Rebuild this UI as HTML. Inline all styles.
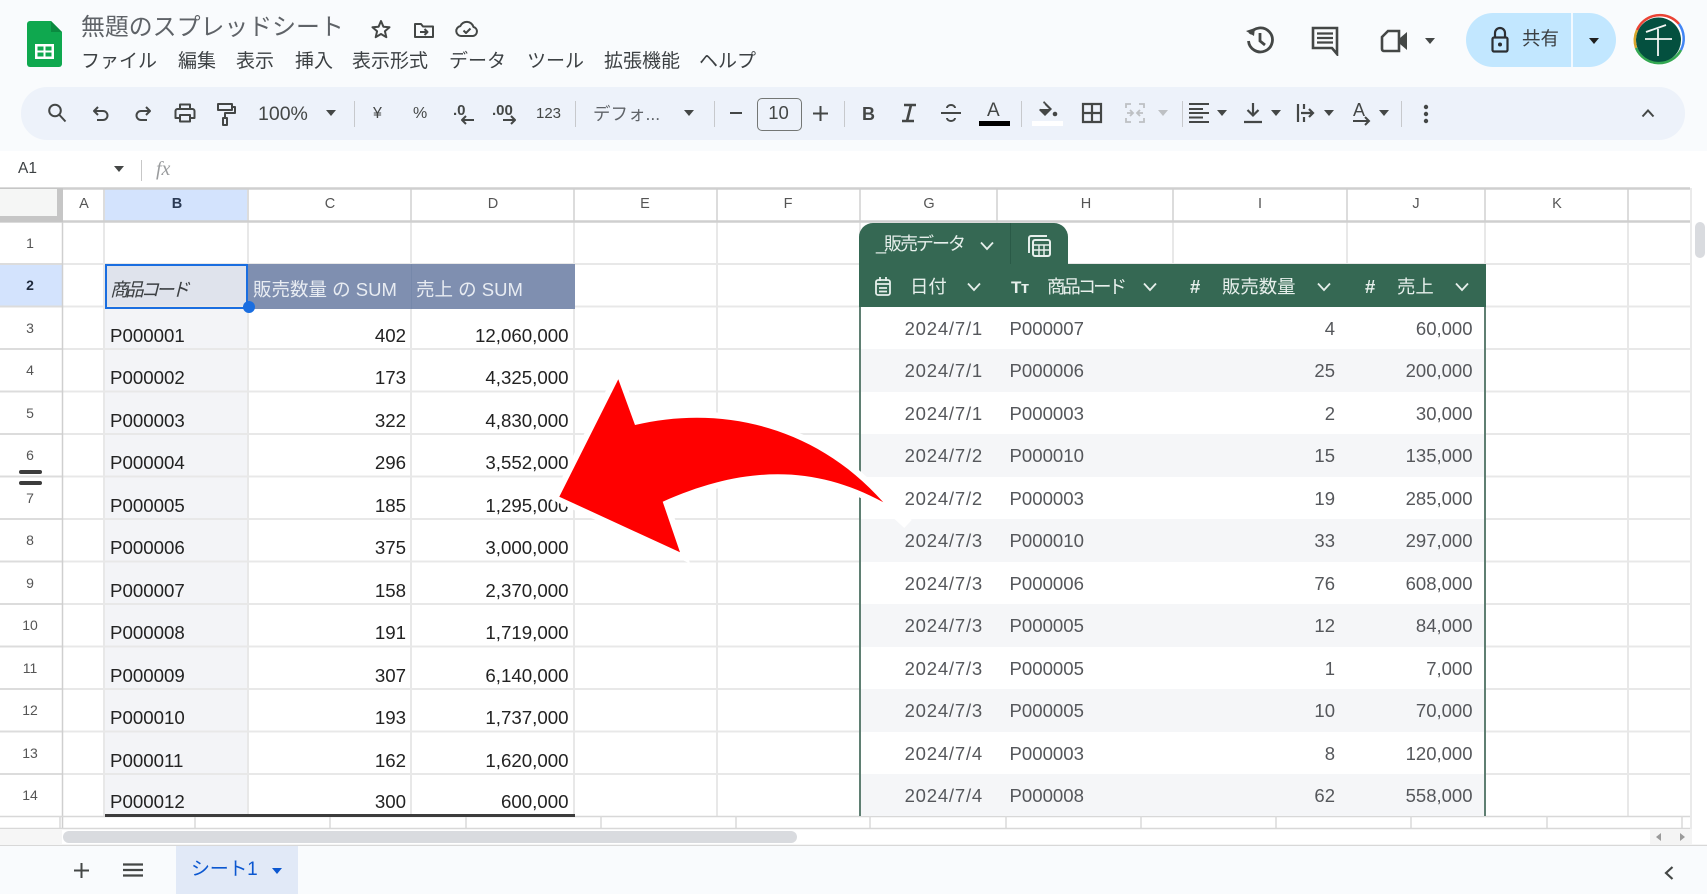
<!DOCTYPE html>
<html lang="ja"><head><meta charset="utf-8"><title>無題のスプレッドシート</title>
<style>
html,body{margin:0;padding:0;background:#fff}
#p{position:relative;width:1707px;height:894px;overflow:hidden;background:#fff;font-family:"Liberation Sans","Noto Sans CJK JP",sans-serif;color:#444746;filter:blur(.35px)}
#p div,#p span.t,#p svg{position:absolute}
.t{white-space:nowrap;line-height:24px;position:absolute}
.m{top:50px;font-size:19px;color:#3c4043}
.tb{top:102px;font-size:17px;color:#444746}
.d{width:1px;background:#c7c9cc;top:101px;height:26px}
.ic{fill:none;stroke:#444746;stroke-width:2;stroke-linecap:butt;stroke-linejoin:round}
.ar{width:0;height:0;border-left:5.5px solid transparent;border-right:5.5px solid transparent;border-top:6px solid #444746;top:110px}
.ch{font-size:14.5px;color:#555;top:192px;width:40px;text-align:center}
.rh{font-size:14px;color:#555;left:10px;width:40px;text-align:center}
.r{left:0;width:1707px;height:24px}
.a{left:110px;font-size:18.7px;color:#222}
.b{right:1301px;font-size:18.7px;color:#222}
.c{right:1138.5px;font-size:18.7px;color:#222}
.e{right:724px;font-size:18.5px;color:#55575b;letter-spacing:.8px}
.f{left:1009.5px;font-size:18.6px;color:#55575b}
.g{right:372px;font-size:18.5px;color:#55575b}
.h{right:234.5px;font-size:18.5px;color:#55575b}
.w{color:#e8ecf2;font-size:18.5px;top:278px}
.th{color:#e6efeb;font-size:18.4px;top:275px}
</style></head><body><div id="p">

<!-- top -->
<div style="left:0;top:0;width:1707px;height:151px;background:#f9fbfd"></div>
<svg style="left:27px;top:20px" width="36" height="48" viewBox="0 0 36 48"><path d="M3 1H24L35 12V44a3 3 0 0 1-3 3H3a3 3 0 0 1-3-3V4a3 3 0 0 1 3-3z" fill="#0fa84f"/><path d="M24 1L35 12H24z" fill="#0b8a40"/><path d="M8 24H27V39H8z M10.500 26.500V30.500H16.500V26.500z M18.500 26.500V30.500H24.500V26.500z M10.500 32.500V36.500H16.500V32.500z M18.500 32.500V36.500H24.500V32.500z" fill="#fff" fill-rule="evenodd"/></svg>
<span class="t" style="left:81px;top:16px;font-size:23.9px;color:#5f6368">無題のスプレッドシート</span>
<svg style="left:369px;top:17px" width="24" height="24" viewBox="0 0 24 24"><path class="ic" d="M12 4l2.400 5.700 6.100.5-4.600 4 1.400 6L12 17l-5.300 3.200 1.400-6-4.600-4 6.100-.5z"/></svg>
<svg style="left:412px;top:18px" width="24" height="24" viewBox="0 0 24 24"><path class="ic" d="M3 6h6l2 2.500h10V19H3z"/><path class="ic" d="M8 14h7M12.500 11l3 3-3 3"/></svg>
<svg style="left:454px;top:17px" width="26" height="24" viewBox="0 0 26 24"><path class="ic" d="M7 19a5 5 0 0 1-.7-9.900A7 7 0 0 1 19.500 10 4.600 4.600 0 0 1 19 19z"/><path class="ic" d="M9.500 13.500l2.500 2.500 4.500-4.500"/></svg>
<span class="t m" style="left:81px">ファイル</span>
<span class="t m" style="left:178px">編集</span>
<span class="t m" style="left:236px">表示</span>
<span class="t m" style="left:295px">挿入</span>
<span class="t m" style="left:352px">表示形式</span>
<span class="t m" style="left:449px">データ</span>
<span class="t m" style="left:527px">ツール</span>
<span class="t m" style="left:604px">拡張機能</span>
<span class="t m" style="left:699px">ヘルプ</span>

<!-- right top -->
<svg style="left:1244px;top:24px" width="32" height="32" viewBox="0 0 32 32"><path d="M6 10A12 12 0 1 1 4.500 17" fill="none" stroke="#444746" stroke-width="2.800"/><path d="M2 7l8 5 1-8z" fill="#444746"/><path d="M16 9v8l5 4" fill="none" stroke="#444746" stroke-width="2.800"/></svg>
<svg style="left:1309px;top:24px" width="32" height="32" viewBox="0 0 32 32"><path d="M4 4H28V30L23 24H4z" fill="none" stroke="#444746" stroke-width="2.600"/><path d="M8 9.500H24M8 14H24M8 18.500H24" stroke="#444746" stroke-width="2.200"/></svg>
<svg style="left:1380px;top:28px" width="30" height="26" viewBox="0 0 30 26"><path d="M8 3H19V23H4a2 2 0 0 1-2-2V9z" fill="none" stroke="#444746" stroke-width="2.600"/><path d="M20 10l7-6V22l-7-6z" fill="#444746"/></svg>
<div style="left:1425px;top:38px;width:0;height:0;border-left:5px solid transparent;border-right:5px solid transparent;border-top:6px solid #444746"></div>
<div style="left:1466px;top:13px;width:150px;height:54px;border-radius:27px;background:#c2e7ff"></div>
<div style="left:1571px;top:13px;width:1.500px;height:54px;background:#f2f9ff"></div>
<svg style="left:1487px;top:26px" width="26" height="28" viewBox="0 0 26 28"><path d="M8 12V7a5 5 0 0 1 10 0v5" fill="none" stroke="#2b2f33" stroke-width="2.200"/><rect x="5.500" y="11.500" width="15" height="14" rx="1.500" fill="none" stroke="#2b2f33" stroke-width="2.200"/><circle cx="13" cy="18.500" r="2" fill="#2b2f33"/></svg>
<span class="t" style="left:1522px;top:27px;font-size:18.500px;color:#3c4043">共有</span>
<div style="left:1589px;top:38px;width:0;height:0;border-left:5.500px solid transparent;border-right:5.500px solid transparent;border-top:6px solid #1f1f1f"></div>
<svg style="left:1631px;top:12px" width="55" height="56" viewBox="0 0 55 56"><circle cx="27.500" cy="28" r="25.500" fill="#fff"/><circle cx="27.500" cy="28" r="22.500" fill="#04503f"/><path d="M5 36A25 25 0 0 1 6 18" fill="none" stroke="#d7a52b" stroke-width="2.500"/><path d="M6 18A25 25 0 0 1 48 12" fill="none" stroke="#ea4335" stroke-width="2.500"/><path d="M48 12A25 25 0 0 1 50 38" fill="none" stroke="#4285f4" stroke-width="2.500"/><path d="M50 38A25 25 0 0 1 5 36" fill="none" stroke="#34a853" stroke-width="2.500"/><path d="M15 20l20-7M14 27H41M27 17V44" fill="none" stroke="#f4f7f5" stroke-width="1.800"/></svg>

<!-- toolbar -->
<div style="left:21px;top:87px;width:1664px;height:53px;border-radius:26px;background:#edf2fa"></div>
<svg style="left:45px;top:101px" width="24" height="24" viewBox="0 0 24 24"><circle cx="10" cy="9.500" r="5.800" class="ic" fill="none"/><path class="ic" d="M14.500 14l6 6.500"/></svg>
<svg style="left:89px;top:102px" width="24" height="24" viewBox="0 0 24 24"><path class="ic" d="M9 5L5 9l4 4M5 9h9a4.500 4.500 0 0 1 0 9H8"/></svg>
<svg style="left:131px;top:102px" width="24" height="24" viewBox="0 0 24 24"><path class="ic" d="M15 5l4 4-4 4M19 9h-9a4.500 4.500 0 0 0 0 9h6"/></svg>
<svg style="left:173px;top:101px" width="24" height="24" viewBox="0 0 24 24"><path class="ic" d="M7 8V3.500h10V8M7 17H2.500V10a2 2 0 0 1 2-2h15a2 2 0 0 1 2 2v7H17M7 14h10v6.500H7z"/></svg>
<svg style="left:214px;top:101px" width="24" height="26" viewBox="0 0 24 26"><path class="ic" d="M4 3h14v6H4zM18 6h3v6H11v5M9 17h4v7H9z"/></svg>
<span class="t tb" style="left:258px;top:102px;font-size:19.500px">100%</span>
<div class="ar" style="left:326px"></div>
<div class="d" style="left:354px"></div>
<span class="t tb" style="left:373px;font-size:16px">¥</span>
<span class="t tb" style="left:413px;font-size:16px">%</span>
<span class="t tb" style="left:453px;top:99px;font-size:15px;font-weight:700">.0</span>
<svg style="left:458px;top:113px" width="18" height="14" viewBox="0 0 18 14"><path class="ic" d="M16 7H4M8 3L4 7l4 4"/></svg>
<span class="t tb" style="left:492px;top:99px;font-size:15px;font-weight:700">.00</span>
<svg style="left:501px;top:113px" width="18" height="14" viewBox="0 0 18 14"><path class="ic" d="M2 7h12M10 3l4 4-4 4"/></svg>
<span class="t tb" style="left:536px;top:102px;font-size:15px">123</span>
<div class="d" style="left:575px"></div>
<span class="t tb" style="left:593px;font-size:17.500px;color:#5f6368">デフォ...</span>
<div class="ar" style="left:684px"></div>
<div class="d" style="left:714px"></div>
<svg style="left:729px;top:107px" width="14" height="12" viewBox="0 0 14 12"><path d="M1 6H13" stroke="#444746" stroke-width="2"/></svg>
<div style="left:757px;top:98px;width:43px;height:31px;border:1px solid #747775;border-radius:5px;box-sizing:content-box"></div>
<span class="t tb" style="left:756px;top:101px;width:45px;text-align:center;font-size:18.500px">10</span>
<svg style="left:813px;top:106px" width="15" height="15" viewBox="0 0 15 15"><path d="M0 7.500H15M7.500 0V15" stroke="#444746" stroke-width="2"/></svg>
<div class="d" style="left:844px"></div>
<span class="t tb" style="left:862px;font-size:18px;font-weight:700">B</span>
<svg style="left:898px;top:102px" width="22" height="22" viewBox="0 0 22 22"><path d="M6 3H18M4 19H16M13 3L9 19" fill="none" stroke="#444746" stroke-width="2.600"/></svg>
<svg style="left:940px;top:102px" width="22" height="22" viewBox="0 0 22 22"><path class="ic" d="M1 11H21M15 6a4 3 0 0 0-8 0M7 16a4 3 0 0 0 8 0"/></svg>
<span class="t tb" style="left:987px;top:99px;font-size:19px">A</span>
<div style="left:979px;top:121px;width:31px;height:5px;background:#000"></div>
<div class="d" style="left:1021px"></div>
<svg style="left:1036px;top:99px" width="24" height="22" viewBox="0 0 24 22"><path d="M8 2l-1 2 2 1-6 6 6 6 7-7z" fill="#444746"/><path d="M8 5l5 5H4z" fill="#edf2fa"/><circle cx="19" cy="15" r="2.300" fill="#444746"/></svg>
<div style="left:1032px;top:121px;width:31px;height:5px;background:#fff"></div>
<svg style="left:1081px;top:102px" width="22" height="22" viewBox="0 0 22 22"><path d="M2 2H20V20H2zM11 2V20M2 11H20" fill="none" stroke="#444746" stroke-width="2.200"/></svg>
<svg style="left:1124px;top:102px" width="22" height="22" viewBox="0 0 22 22"><path d="M2 6V2H7M15 2H20V6M2 16V20H7M15 20H20V16M3 11H9M6 8l3 3-3 3M19 11H13M16 8l-3 3 3 3" fill="none" stroke="#bdc0c3" stroke-width="1.800"/></svg>
<div class="ar" style="left:1158px;border-top-color:#bdc0c3"></div>
<div class="d" style="left:1182px"></div>
<svg style="left:1188px;top:102px" width="22" height="22" viewBox="0 0 22 22"><path d="M1 2H21M1 7H15M1 11H21M1 15.500H15M1 20H21" stroke="#444746" stroke-width="2"/></svg>
<div class="ar" style="left:1217px"></div>
<svg style="left:1243px;top:102px" width="20" height="22" viewBox="0 0 20 22"><path d="M10 1V13M4.500 8L10 13.500 15.500 8M1 20H19" fill="none" stroke="#444746" stroke-width="2.200"/></svg>
<div class="ar" style="left:1271px"></div>
<svg style="left:1296px;top:102px" width="20" height="22" viewBox="0 0 20 22"><path d="M2 2V20M8 2V7M8 15V20M5 11H17M13 7l4 4-4 4" fill="none" stroke="#444746" stroke-width="2.200"/></svg>
<div class="ar" style="left:1324px"></div>
<span class="t tb" style="left:1353px;top:98px;font-size:18px">A</span>
<svg style="left:1352px;top:116px" width="20" height="12" viewBox="0 0 20 12"><path d="M1 5H17M13 1l4 4-4 4" fill="none" stroke="#444746" stroke-width="2"/></svg>
<div class="ar" style="left:1379px"></div>
<div class="d" style="left:1401px"></div>
<svg style="left:1422px;top:104px" width="8" height="20" viewBox="0 0 8 20"><circle cx="4" cy="3" r="2.200" fill="#444746"/><circle cx="4" cy="10" r="2.200" fill="#444746"/><circle cx="4" cy="17" r="2.200" fill="#444746"/></svg>
<svg style="left:1641px;top:108px" width="14" height="10" viewBox="0 0 14 10"><path d="M1.500 8.500L7 2.500l5.500 6" fill="none" stroke="#444746" stroke-width="2"/></svg>

<!-- formula bar -->
<span class="t" style="left:18px;top:157px;font-size:15.500px;color:#3c4043">A1</span>
<div style="left:114px;top:166px;width:0;height:0;border-left:5.500px solid transparent;border-right:5.500px solid transparent;border-top:6px solid #444746"></div>
<div style="left:141px;top:160px;width:1px;height:21px;background:#c7c7c7"></div>
<span class="t" style="left:156px;top:157px;font-family:'Liberation Serif',serif;font-style:italic;font-size:20px;color:#9a9c9e">fx</span>

<!-- cell fills -->
<div style="left:105px;top:307px;width:142px;height:508px;background:#f3f4f7"></div>
<div style="left:105px;top:264px;width:143px;height:45px;background:#dfe3ec"></div>
<div style="left:105px;top:188px;width:143px;height:34px;background:#d3e3fd"></div>
<div style="left:0;top:264px;width:62px;height:43px;background:#d3e3fd"></div>

<!-- grid -->
<svg style="left:0;top:0" width="1707" height="894" viewBox="0 0 1707 894">
<g stroke="#e8e8e8" stroke-width="2">
<path d="M104 222V816M248 222V816M411 222V816M574 222V816M717 222V816M860 222V816M997 222V816M1173 222V816M1347 222V816M1485 222V816M1628 222V816"/>
<path d="M62 264H1690M62 306.500H1690M62 349H1690M62 391.500H1690M62 434H1690M62 476.500H1690M62 519H1690M62 561.500H1690M62 604H1690M62 646.500H1690M62 689H1690M62 731.500H1690M62 774H1690"/>
</g>
<g stroke="#dcdcdc" stroke-width="2">
<path d="M0 264H62M0 306.500H62M0 349H62M0 391.500H62M0 434H62M0 476.500H62M0 519H62M0 561.500H62M0 604H62M0 646.500H62M0 689H62M0 731.500H62M0 774H62"/>
<path d="M104 189V221M248 189V221M411 189V221M574 189V221M717 189V221M860 189V221M997 189V221M1173 189V221M1347 189V221M1485 189V221M1628 189V221"/>
</g>
<path d="M0 188.500H1690M0 221.500H1690" stroke="#cfcfcf" stroke-width="2.500"/>
<path d="M62.500 222V828" stroke="#cfcfcf" stroke-width="1.500"/>
<rect x="0" y="188" width="63" height="34" fill="#c6c6c6"/>
<rect x="0" y="189" width="57" height="27" fill="#f5f6f5"/>
<path d="M0 816.500H1690M0 828.500H1690M0 845.500H1707" stroke="#d8d8d8" stroke-width="1.500"/>
<path d="M60 816V828M195 816V828M330 816V828M466 816V828M601 816V828M736 816V828M870 816V828M1006 816V828M1141 816V828M1276 816V828M1411 816V828M1547 816V828M1682 816V828" stroke="#dadada" stroke-width="1.500"/>
<path d="M1691 188V845" stroke="#e4e4e4" stroke-width="1.500"/>
</svg>
<div style="left:248px;top:264px;width:327px;height:45px;background:#7f8fb0"></div>
<div style="left:411px;top:264px;width:1px;height:45px;background:#7688aa"></div>
<div style="left:105px;top:814px;width:470px;height:3px;background:#3c3c3c"></div>

<!-- column letters -->
<span class="t ch" style="left:64px">A</span>
<span class="t ch" style="left:157px;font-weight:700;color:#2a3a55">B</span>
<span class="t ch" style="left:310px">C</span>
<span class="t ch" style="left:473px">D</span>
<span class="t ch" style="left:625px">E</span>
<span class="t ch" style="left:768px">F</span>
<span class="t ch" style="left:909px">G</span>
<span class="t ch" style="left:1066px">H</span>
<span class="t ch" style="left:1240px">I</span>
<span class="t ch" style="left:1396px">J</span>
<span class="t ch" style="left:1537px">K</span>

<!-- row labels -->
<span class="t rh" style="top:231px">1</span>
<span class="t rh" style="top:273px;font-weight:700;color:#1f2a3c">2</span>
<span class="t rh" style="top:316px">3</span>
<span class="t rh" style="top:358px">4</span>
<span class="t rh" style="top:401px">5</span>
<span class="t rh" style="top:443px">6</span>
<span class="t rh" style="top:486px">7</span>
<span class="t rh" style="top:528px">8</span>
<span class="t rh" style="top:571px">9</span>
<span class="t rh" style="top:613px">10</span>
<span class="t rh" style="top:656px">11</span>
<span class="t rh" style="top:698px">12</span>
<span class="t rh" style="top:741px">13</span>
<span class="t rh" style="top:783px">14</span>
<div style="left:19px;top:470px;width:23px;height:4px;background:#3c3c3c;border-radius:2px"></div>
<div style="left:19px;top:481px;width:23px;height:4px;background:#3c3c3c;border-radius:2px"></div>

<!-- pivot -->
<span class="t" style="left:110px;top:278px;font-size:18.500px;font-style:italic;color:#3c4043;letter-spacing:-3.200px">商品コード</span>
<span class="t w" style="left:253px">販売数量 の SUM</span>
<span class="t w" style="left:416px">売上 の SUM</span>
<div style="left:105px;top:264px;width:139px;height:41px;border:2px solid #1a6ee0"></div>
<div style="left:243px;top:301px;width:12px;height:12px;border-radius:50%;background:#1a6ee0"></div>

<div class="r" style="top:323.500px"><span class="t a">P000001</span><span class="t b">402</span><span class="t c">12,060,000</span></div>
<div class="r" style="top:366px"><span class="t a">P000002</span><span class="t b">173</span><span class="t c">4,325,000</span></div>
<div class="r" style="top:408.500px"><span class="t a">P000003</span><span class="t b">322</span><span class="t c">4,830,000</span></div>
<div class="r" style="top:451px"><span class="t a">P000004</span><span class="t b">296</span><span class="t c">3,552,000</span></div>
<div class="r" style="top:493.500px"><span class="t a">P000005</span><span class="t b">185</span><span class="t c">1,295,000</span></div>
<div class="r" style="top:536px"><span class="t a">P000006</span><span class="t b">375</span><span class="t c">3,000,000</span></div>
<div class="r" style="top:578.500px"><span class="t a">P000007</span><span class="t b">158</span><span class="t c">2,370,000</span></div>
<div class="r" style="top:621px"><span class="t a">P000008</span><span class="t b">191</span><span class="t c">1,719,000</span></div>
<div class="r" style="top:663.500px"><span class="t a">P000009</span><span class="t b">307</span><span class="t c">6,140,000</span></div>
<div class="r" style="top:706px"><span class="t a">P000010</span><span class="t b">193</span><span class="t c">1,737,000</span></div>
<div class="r" style="top:748.500px"><span class="t a">P000011</span><span class="t b">162</span><span class="t c">1,620,000</span></div>
<div class="r" style="top:789.500px"><span class="t a">P000012</span><span class="t b">300</span><span class="t c">600,000</span></div>

<!-- table -->
<div style="left:860px;top:307px;width:625px;height:509px;background:#fff"></div>
<div style="left:860px;top:349px;width:625px;height:42.500px;background:#f5f6f8"></div>
<div style="left:860px;top:434px;width:625px;height:42.500px;background:#f5f6f8"></div>
<div style="left:860px;top:519px;width:625px;height:42.500px;background:#f5f6f8"></div>
<div style="left:860px;top:604px;width:625px;height:42.500px;background:#f5f6f8"></div>
<div style="left:860px;top:689px;width:625px;height:42.500px;background:#f5f6f8"></div>
<div style="left:860px;top:774px;width:625px;height:42px;background:#f5f6f8"></div>
<div style="left:859px;top:264px;width:2px;height:552px;background:#5f7f72"></div>
<div style="left:1484px;top:264px;width:2px;height:552px;background:#5f7f72"></div>
<div style="left:859px;top:223px;width:209px;height:42px;background:#356853;border-radius:14px 14px 0 0"></div>
<div style="left:859px;top:264px;width:627px;height:43px;background:#356853"></div>
<div style="left:1010px;top:223px;width:1px;height:41px;background:#2a5a47"></div>
<span class="t" style="left:876px;top:232px;font-size:18px;color:#e6efeb;letter-spacing:-2px">_販売データ</span>
<svg style="left:980px;top:241px" width="14" height="10" viewBox="0 0 14 10"><path d="M1 1.500L7 8l6-6.500" fill="none" stroke="#e6efeb" stroke-width="1.800"/></svg>
<svg style="left:1027px;top:232px" width="25" height="26" viewBox="0 0 25 26"><path d="M2 21V6a2 2 0 0 1 2-2H20" fill="none" stroke="#e6efeb" stroke-width="2"/><rect x="6" y="8" width="17" height="16" rx="2" fill="none" stroke="#e6efeb" stroke-width="2"/><path d="M6 13H23M6 18H23M12 13V24M17 13V24" stroke="#e6efeb" stroke-width="1.500"/></svg>
<svg style="left:874px;top:276px" width="18" height="22" viewBox="0 0 18 22"><rect x="2" y="4" width="14" height="15" rx="2" fill="none" stroke="#e6efeb" stroke-width="1.800"/><path d="M2 8H16M6 1V5M12 1V5M5 12H13M5 15.500H13" stroke="#e6efeb" stroke-width="1.800"/></svg>
<span class="t th" style="left:910px">日付</span>
<svg style="left:967px;top:282px" width="14" height="10" viewBox="0 0 14 10"><path d="M1 1.500L7 8l6-6.500" fill="none" stroke="#e6efeb" stroke-width="1.800"/></svg>
<span class="t" style="left:1011px;top:276px;font-size:17px;font-weight:700;color:#e6efeb;letter-spacing:-.5px">Tт</span>
<span class="t th" style="left:1047px;letter-spacing:-3px">商品コード</span>
<svg style="left:1143px;top:282px" width="14" height="10" viewBox="0 0 14 10"><path d="M1 1.500L7 8l6-6.500" fill="none" stroke="#e6efeb" stroke-width="1.800"/></svg>
<span class="t" style="left:1190px;top:275px;font-size:18.500px;font-weight:700;color:#e6efeb">#</span>
<span class="t th" style="left:1222px">販売数量</span>
<svg style="left:1317px;top:282px" width="14" height="10" viewBox="0 0 14 10"><path d="M1 1.500L7 8l6-6.500" fill="none" stroke="#e6efeb" stroke-width="1.800"/></svg>
<span class="t" style="left:1365px;top:275px;font-size:18.500px;font-weight:700;color:#e6efeb">#</span>
<span class="t th" style="left:1397px">売上</span>
<svg style="left:1455px;top:282px" width="14" height="10" viewBox="0 0 14 10"><path d="M1 1.500L7 8l6-6.500" fill="none" stroke="#e6efeb" stroke-width="1.800"/></svg>

<div class="r" style="top:316.500px"><span class="t e">2024/7/1</span><span class="t f">P000007</span><span class="t g">4</span><span class="t h">60,000</span></div>
<div class="r" style="top:359px"><span class="t e">2024/7/1</span><span class="t f">P000006</span><span class="t g">25</span><span class="t h">200,000</span></div>
<div class="r" style="top:401.500px"><span class="t e">2024/7/1</span><span class="t f">P000003</span><span class="t g">2</span><span class="t h">30,000</span></div>
<div class="r" style="top:444px"><span class="t e">2024/7/2</span><span class="t f">P000010</span><span class="t g">15</span><span class="t h">135,000</span></div>
<div class="r" style="top:486.500px"><span class="t e">2024/7/2</span><span class="t f">P000003</span><span class="t g">19</span><span class="t h">285,000</span></div>
<div class="r" style="top:529px"><span class="t e">2024/7/3</span><span class="t f">P000010</span><span class="t g">33</span><span class="t h">297,000</span></div>
<div class="r" style="top:571.500px"><span class="t e">2024/7/3</span><span class="t f">P000006</span><span class="t g">76</span><span class="t h">608,000</span></div>
<div class="r" style="top:614px"><span class="t e">2024/7/3</span><span class="t f">P000005</span><span class="t g">12</span><span class="t h">84,000</span></div>
<div class="r" style="top:656.500px"><span class="t e">2024/7/3</span><span class="t f">P000005</span><span class="t g">1</span><span class="t h">7,000</span></div>
<div class="r" style="top:699px"><span class="t e">2024/7/3</span><span class="t f">P000005</span><span class="t g">10</span><span class="t h">70,000</span></div>
<div class="r" style="top:741.500px"><span class="t e">2024/7/4</span><span class="t f">P000003</span><span class="t g">8</span><span class="t h">120,000</span></div>
<div class="r" style="top:784px"><span class="t e">2024/7/4</span><span class="t f">P000008</span><span class="t g">62</span><span class="t h">558,000</span></div>

<!-- arrow -->
<svg style="left:0;top:0" width="1707" height="894" viewBox="0 0 1707 894">
<path d="M880 498L908 524" stroke="#fff" stroke-width="11" fill="none"/>
<path d="M618.300 379.300L635 425C720 405 815 425 883.300 502.300C815 465 745 465 662.700 501.700L680 552.300L559.300 496.700Z" fill="#fff" stroke="#fff" stroke-width="12" stroke-linejoin="miter"/>
<path d="M618.300 379.300L635 425C720 405 815 425 883.300 502.300C815 465 745 465 662.700 501.700L680 552.300L559.300 496.700Z" fill="#ff0000"/>
</svg>

<!-- scrollbars -->
<div style="left:0;top:829px;width:62px;height:16px;background:#f6f6f6"></div>
<div style="left:63px;top:831px;width:734px;height:12px;border-radius:6px;background:#d9dbdf"></div>
<div style="left:1650px;top:829px;width:42px;height:16px;background:#f4f4f4"></div>
<div style="left:1656px;top:833px;width:0;height:0;border-top:4px solid transparent;border-bottom:4px solid transparent;border-right:5px solid #9a9a9a"></div>
<div style="left:1680px;top:833px;width:0;height:0;border-top:4px solid transparent;border-bottom:4px solid transparent;border-left:5px solid #9a9a9a"></div>
<div style="left:1695px;top:222px;width:10px;height:36px;border-radius:5px;background:#d9dbdf"></div>

<!-- tabs -->
<div style="left:0;top:846px;width:1707px;height:48px;background:#f9fbfd"></div>
<svg style="left:74px;top:863px" width="15" height="15" viewBox="0 0 15 15"><path d="M0 7.500H15M7.500 0V15" stroke="#444746" stroke-width="2"/></svg>
<svg style="left:123px;top:863px" width="20" height="14" viewBox="0 0 20 14"><path d="M0 1.500H20M0 7H20M0 12.500H20" stroke="#444746" stroke-width="2.200"/></svg>
<div style="left:176px;top:846px;width:122px;height:48px;background:#e1e9f7"></div>
<span class="t" style="left:191px;top:858px;font-size:19px;color:#0b57d0;letter-spacing:-.3px">シート1</span>
<div style="left:272px;top:868px;width:0;height:0;border-left:5px solid transparent;border-right:5px solid transparent;border-top:6px solid #0b57d0"></div>
<svg style="left:1663px;top:865px" width="12" height="16" viewBox="0 0 12 16"><path d="M9.500 2L3 8l6.500 6" fill="none" stroke="#444746" stroke-width="2.200"/></svg>
</div></body></html>
